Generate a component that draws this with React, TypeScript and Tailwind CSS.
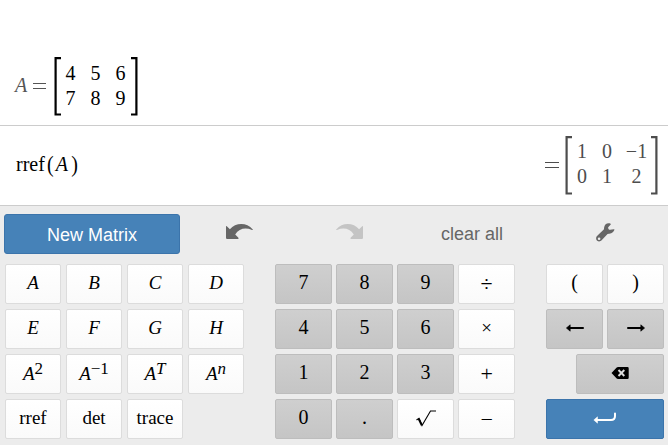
import type { ReactNode } from "react";

const serif = "font-['Liberation_Serif',serif]";

function Key({ children, tone = "light", className = "" }: { children: ReactNode; tone?: "light" | "gray" | "blue"; className?: string }) {
  const tones = {
    light: "border-[#dcdcdc] bg-linear-to-b from-white to-[#fafafa]",
    gray: "border-[#bdbdbd] bg-linear-to-b from-[#cfcfcf] to-[#c5c5c5]",
    blue: "border-[#3b74ab] bg-[#4682b8]",
  };
  return (
    <button className={`flex h-10 items-center justify-center rounded-[2px] border text-[19px] leading-none text-black ${serif} ${tones[tone]} ${className}`}>
      <span className="flex h-6 items-center justify-center pb-[4px]">{children}</span>
    </button>
  );
}

function Bracket({ flip = false }: { flip?: boolean }) {
  return (
    <svg width="7" height="59" viewBox="0 0 7 59" className={flip ? "-scale-x-100" : ""}>
      <path d="M7 1.2H1.6V57.5H7" fill="none" stroke="currentColor" strokeWidth="2.2" />
    </svg>
  );
}

function Arrow({ right = false }: { right?: boolean }) {
  return (
    <svg width="18" height="8" viewBox="0 0 18 8" className={right ? "mt-px -scale-x-100" : "mt-px"}>
      <path d="M3 4H17" stroke="#000" strokeWidth="2" strokeLinecap="round" />
      <path d="M.4 4L4.2 .8V7.2Z" fill="#000" stroke="#000" strokeWidth=".6" strokeLinejoin="round" />
    </svg>
  );
}

function Undo({ redo = false }: { redo?: boolean }) {
  return (
    <svg width="27" height="16" viewBox="0 0 27 16" className={redo ? "-scale-x-100 text-[#c4c4c4]" : "text-[#666]"}>
      <path d="M0 2.6Q0 1.7 .8 2.3L3.9 5.3C9.5-1.4 20.5-2 26.8 5.5Q27 6.3 26 6C19.5 3.1 13 4.5 9.2 10.4L12.2 13.5Q13 15 11.8 15H1.1Q0 15 0 13.8Z" fill="currentColor" />
    </svg>
  );
}

function Power({ exp, italic = false }: { exp: string; italic?: boolean }) {
  return (
    <span className="flex items-start">
      <i className="pt-[3px]">A</i>
      <span className={`-mt-px text-[17px] leading-none ${italic ? "italic" : ""}`}>{exp}</span>
    </span>
  );
}

function Digit({ children }: { children: string }) {
  return <span className="text-[20px]">{children}</span>;
}

function Operator({ children }: { children: string }) {
  return <span className="scale-x-110 pt-[3px] text-[20px]">{children}</span>;
}

function Paren({ children }: { children: string }) {
  return <span className="inline-block w-[9px] scale-y-[1.18] text-center text-[20px]">{children}</span>;
}

export default function App() {
  return (
    <main className="h-[445px] w-[668px] overflow-hidden bg-white font-['Liberation_Sans',sans-serif]">
      <section className={`flex h-[126px] border-b border-[#ccc] pt-[57px] pl-[15px] text-[20px] ${serif}`}>
        <div className="flex w-[39px] gap-[5px] pt-[16px] leading-[24px] text-[#555]">
          <i>A</i>
          <svg className="mt-px" width="15" height="24" viewBox="0 0 15 24"><path d="M1 9.5H14M1 14.5H14" stroke="currentColor" /></svg>
        </div>
        <Bracket />
        <div className="mr-[-3px] ml-[-3px] grid h-[53px] w-[76px] grid-cols-[25px_25px_25px] grid-rows-2 pt-[4px] leading-[24.5px]">
          {["4", "5", "6", "7", "8", "9"].map((n) => <span key={n} className="text-center">{n}</span>)}
        </div>
        <Bracket flip />
      </section>

      <section className={`flex h-20 justify-between border-b border-[#ccc] pr-[10px] pl-4 text-[20px] ${serif}`}>
        <div className="flex items-baseline pt-[26px] leading-[24px]">
          <span className="mr-px">rref</span><Paren>(</Paren><i className="mr-[2px] ml-px">A</i><Paren>)</Paren>
        </div>
        <div className="flex pt-[10px] text-[#4d4d4d]">
          <svg width="21" height="59" viewBox="0 0 21 59"><path d="M1 26.5H15M1 31.5H15" stroke="currentColor" /></svg>
          <Bracket />
          <div className="grid h-[53px] w-[79px] grid-cols-[20px_30px_29px] pt-[3px] leading-[24.5px]">
            <span className="text-center">1</span><span className="text-center">0</span><span className="text-center whitespace-nowrap">−1</span>
            <span className="text-center">0</span><span className="text-center">1</span><span className="text-center">2</span>
          </div>
          <Bracket flip />
        </div>
      </section>

      <section className="h-[239px] bg-[#ececec] pt-2 pl-[5px]">
        <div className="flex h-[50px]">
          <button className="-ml-px h-10 w-[176px] rounded-[3px] border border-[#3b74ab] bg-[#4682b8] pt-[2px] text-[18px] text-white">New Matrix</button>
          <div className="flex w-[120px] pt-[10px] pl-[46px]"><Undo /></div>
          <div className="w-[141px] pt-[10px] pl-[36px]"><Undo redo /></div>
          <div className="w-[155px] pt-[7px] text-[18px] leading-[27px] text-[#666]">clear all</div>
          <svg className="mt-[9px]" width="19" height="19" viewBox="0 0 19 19">
            <path fill="#666" fillRule="evenodd" d="M14.6 .8C11.5-.5 8.6 1.3 8.1 4.4C8 5.6 8.1 6.2 7.5 6.8L1 13.1C-.4 14.6 0 16.8 1.2 17.8C2.7 18.9 4.6 18.5 5.6 17.3L11.1 11.5C11.6 10.9 12.3 11 13.3 10.8C16.1 10.4 18 8.7 18.5 6.6Q18.5 6.1 17.8 6.2L14.1 6.8C12.8 6.8 11.9 5.6 12.2 4.2L14.7 1.5Q15 1 14.6 .8ZM3.1 14.4A1.3 1.3 0 1 0 3.1 17A1.3 1.3 0 1 0 3.1 14.4Z" />
          </svg>
        </div>
        <div className="flex">
          <div className="grid w-[270px] grid-cols-[repeat(4,56px)] content-start gap-[5px]">
            {["A", "B", "C", "D", "E", "F", "G", "H"].map((n) => <Key key={n}><i>{n}</i></Key>)}
            <Key><Power exp="2" /></Key><Key><Power exp="−1" /></Key>
            <Key><Power exp="T" italic /></Key><Key><Power exp="n" italic /></Key>
            <Key>rref</Key><Key>det</Key><Key>trace</Key>
          </div>
          <div className="grid w-[271px] grid-cols-[repeat(4,57px)] content-start gap-x-[4px] gap-y-[5px]">
            <Key tone="gray"><Digit>7</Digit></Key><Key tone="gray"><Digit>8</Digit></Key><Key tone="gray"><Digit>9</Digit></Key><Key><Operator>÷</Operator></Key>
            <Key tone="gray"><Digit>4</Digit></Key><Key tone="gray"><Digit>5</Digit></Key><Key tone="gray"><Digit>6</Digit></Key><Key><span className="pt-px">×</span></Key>
            <Key tone="gray"><Digit>1</Digit></Key><Key tone="gray"><Digit>2</Digit></Key><Key tone="gray"><Digit>3</Digit></Key><Key><Operator>+</Operator></Key>
            <Key tone="gray"><Digit>0</Digit></Key><Key tone="gray"><Digit>.</Digit></Key>
            <Key>
              <svg className="mt-[4px]" width="22" height="18" viewBox="0 0 22 18"><path d="M1.5 10L4 8.3L7 15.5L15.5 1H21" fill="none" stroke="#000" strokeWidth="1.1" /><path d="M3.7 8.7L6.8 15.2" stroke="#000" strokeWidth="2" /></svg>
            </Key>
            <Key><Operator>−</Operator></Key>
          </div>
          <div className="grid grid-cols-[57px_57px] content-start gap-x-[4px] gap-y-[5px]">
            <Key><Digit>(</Digit></Key><Key><Digit>)</Digit></Key>
            <Key tone="gray"><Arrow /></Key><Key tone="gray"><Arrow right /></Key>
            <Key tone="gray" className="col-span-2 ml-[30px]">
              <svg className="mt-px" width="18" height="12" viewBox="0 0 18 12"><path d="M.5 6L5.7.4Q6 0 7 0H16.5Q17.7 0 17.7 1.2V10.8Q17.7 12 16.5 12H7Q6 12 5.7 11.6Z" /><path d="M7.5 3L13.3 9M13.3 3L7.5 9" stroke="#ddd" strokeWidth="1.9" /></svg>
            </Key>
            <Key tone="blue" className="col-span-2">
              <svg className="mt-px text-white" width="24" height="12" viewBox="0 0 24 12"><path d="M4 8H18Q22 8 22 4V1.5" fill="none" stroke="currentColor" strokeWidth="2" strokeLinecap="round" /><path d="M.8 8L4.5 4.8V11.2Z" fill="currentColor" stroke="currentColor" strokeWidth=".5" /></svg>
            </Key>
          </div>
        </div>
      </section>
    </main>
  );
}
